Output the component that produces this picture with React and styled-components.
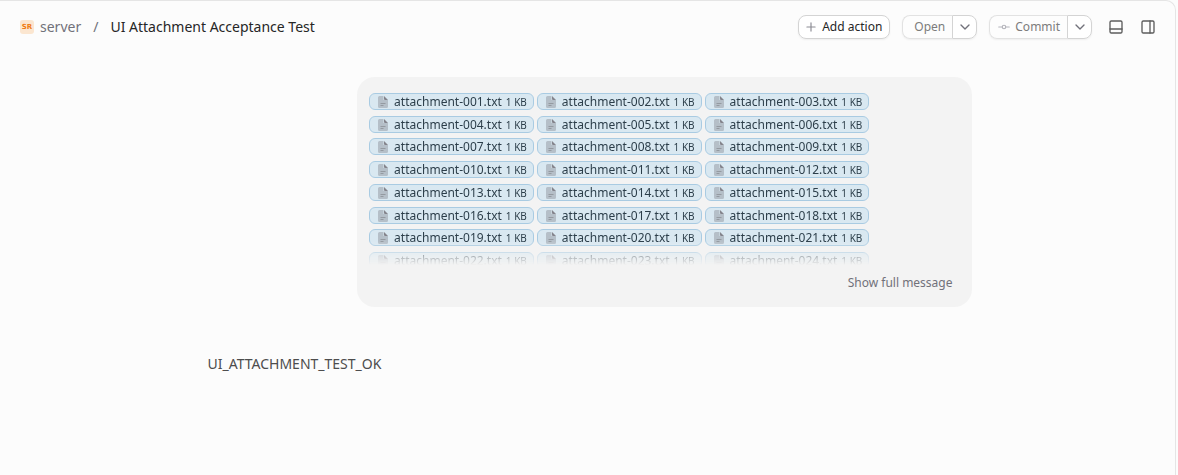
import styled, { createGlobalStyle } from "styled-components";
import { ChevronDown, GitCommitHorizontal, PanelBottom, PanelRight, Plus } from "lucide-react";

const attachments = Array.from({ length: 24 }, (_, i) => ({
    name: `attachment-${String(i + 1).padStart(3, "0")}.txt`,
    size: "1 KB"
}));

const GlobalStyle = createGlobalStyle`
    * {
        box-sizing: border-box;
        margin: 0;
        padding: 0;
    }

    body {
        background-color: #fcfcfc;
        color: #262626;
        font-family: "Noto Sans", sans-serif;
        font-size: 14px;
    }

    button {
        border: 0;
        background: none;
        color: inherit;
        font: inherit;
        cursor: pointer;
    }
`;

const Panel = styled.div`
    min-height: 100vh;
    margin-right: 2px;
    border-top: 1px solid #e5e5e5;
    border-right: 1px solid #e5e5e5;
    border-top-right-radius: 10px;
`;

const Header = styled.header`
    display: flex;
    align-items: center;
    justify-content: space-between;
    height: 52px;
    padding: 0 15px 0 20px;
`;

const Breadcrumb = styled.nav`
    display: flex;
    align-items: center;
    gap: 12px;
    line-height: 20px;

    & a {
        display: flex;
        align-items: center;
        gap: 6px;
        color: #71717a;
        text-decoration: none;
    }

    & h1 {
        font-size: 14px;
        font-weight: 400;
    }
`;

const Separator = styled.span`
    color: #71717a;
`;

const ProjectBadge = styled.span`
    display: flex;
    align-items: center;
    justify-content: center;
    width: 14px;
    height: 14px;
    border-radius: 3px;
    background-color: #fbe6d0;
    color: #f07a10;
    font-family: "DejaVu Sans", sans-serif;
    font-size: 7px;
    font-weight: 700;
    line-height: 14px;
`;

const Actions = styled.div`
    display: flex;
    align-items: center;
    gap: 12px;
`;

const ButtonGroup = styled.div`
    display: flex;
    height: 24px;
    border-radius: 8px;
    box-shadow: 0 1px 2px rgba(0, 0, 0, 0.06);
`;

const ToolButton = styled.button`
    display: flex;
    align-items: center;
    gap: 4px;
    height: 24px;
    padding: 0 7px;
    border: 1px solid ${({ $muted }) => ($muted ? "#e2e2e2" : "#d4d4d4")};
    border-radius: 8px;
    background-color: ${({ $muted }) => ($muted ? "#fdfdfd" : "#ffffff")};
    color: ${({ $muted }) => ($muted ? "#7c7c7c" : "#262626")};
    font-size: 12px;
    line-height: 16px;

    & svg {
        color: ${({ $muted }) => ($muted ? "#b4b4bb" : "#8b8b93")};
    }

    ${ButtonGroup} > &:only-child {
        padding-left: 5px;
    }

    ${ButtonGroup} > &:first-child:not(:last-child) {
        border-right: 0;
        border-radius: 8px 0 0 8px;
    }
`;

const MenuButton = styled.button`
    display: flex;
    align-items: center;
    justify-content: center;
    width: 25px;
    height: 24px;
    border: 1px solid #d4d4d4;
    border-radius: 0 8px 8px 0;
    background-color: #ffffff;
    color: #71717a;
`;

const PanelToggles = styled.div`
    display: flex;
    gap: 8px;
`;

const IconButton = styled.button`
    display: flex;
    align-items: center;
    justify-content: center;
    width: 24px;
    height: 24px;
    color: #5c5c5c;
`;

const Conversation = styled.main`
    display: flex;
    flex-direction: column;
    gap: 45px;
    max-width: 768px;
    margin: 0 auto;
    padding-top: 24px;
`;

const UserMessage = styled.section`
    align-self: flex-end;
    width: 80%;
    padding: 12px;
    border-radius: 18px;
    background-color: #f3f3f3;
`;

const Preview = styled.div`
    height: 176px;
    overflow: hidden;
    mask-image: linear-gradient(to bottom, #000 calc(100% - 24px), transparent);
`;

const AttachmentList = styled.ul`
    display: grid;
    grid-template-columns: repeat(3, max-content);
    grid-template-rows: repeat(8, 1fr);
    column-gap: 3px;
    align-items: center;
    height: 182px;
    margin-top: 1px;
    list-style: none;
`;

const Attachment = styled.li`
    display: flex;
    align-items: center;
    height: 17px;
    padding: 1px 6px 0 7px;
    border: 1px solid #a9cbe2;
    border-radius: 6px;
    background-color: #d9e8f1;
    color: #2c3e4a;
    font-size: 12px;
    line-height: 16px;

    & svg {
        margin-right: 5px;
    }

    & small {
        margin-left: 4px;
        font-size: 10px;
    }
`;

const MessageFooter = styled.div`
    display: flex;
    justify-content: flex-end;
    padding-top: 6px;
`;

const ExpandButton = styled.button`
    height: 24px;
    padding: 0 7px;
    color: #71717a;
    font-size: 12px;
    line-height: 16px;
`;

const Reply = styled.p`
    padding: 0 4px;
    color: #4d4d4d;
    line-height: 24px;
`;

const FileIcon = () => (
    <svg width="12" height="14" viewBox="0 0 12 14" aria-hidden="true">
        <path d="M2.500 1H6.500V5H11V11.500a1.500 1.500 0 0 1-1.500 1.500h-7A1.500 1.500 0 0 1 1 11.500v-9A1.500 1.500 0 0 1 2.500 1z" fill="#b5bfc8" />
        <path d="M7 1L11 5H8a1 1 0 0 1-1-1z" fill="#84848c" />
        <path d="M3.500 8.500h5M3.500 10.500h3" stroke="#90959c" strokeWidth="0.900" />
    </svg>
);

const Toolbar = () => (
    <Actions>
        <ButtonGroup>
            <ToolButton type="button"><Plus size={14} strokeWidth={2} />Add action</ToolButton>
        </ButtonGroup>
        <ButtonGroup>
            <ToolButton type="button" $muted><span />Open</ToolButton>
            <MenuButton type="button" aria-label="Open options"><ChevronDown size={16} /></MenuButton>
        </ButtonGroup>
        <ButtonGroup>
            <ToolButton type="button" $muted><GitCommitHorizontal size={14} />Commit</ToolButton>
            <MenuButton type="button" aria-label="Commit options"><ChevronDown size={16} /></MenuButton>
        </ButtonGroup>
        <PanelToggles>
            <IconButton type="button" aria-label="Toggle bottom panel"><PanelBottom size={16} /></IconButton>
            <IconButton type="button" aria-label="Toggle right panel"><PanelRight size={16} /></IconButton>
        </PanelToggles>
    </Actions>
);

const App = () => {
    return (
        <>
            <GlobalStyle />
            <Panel>
                <Header>
                    <Breadcrumb>
                        <a href="#server"><ProjectBadge>SR</ProjectBadge>server</a>
                        <Separator>/</Separator>
                        <h1>UI Attachment Acceptance Test</h1>
                    </Breadcrumb>
                    <Toolbar />
                </Header>

                <Conversation>
                    <UserMessage>
                        <Preview>
                            <AttachmentList>
                                {attachments.map(({ name, size }) => (
                                    <Attachment key={name}>
                                        <FileIcon />
                                        {name}
                                        <small>{size}</small>
                                    </Attachment>
                                ))}
                            </AttachmentList>
                        </Preview>
                        <MessageFooter>
                            <ExpandButton type="button">Show full message</ExpandButton>
                        </MessageFooter>
                    </UserMessage>

                    <Reply>UI_ATTACHMENT_TEST_OK</Reply>
                </Conversation>
            </Panel>
        </>
    );
};

export default App;
